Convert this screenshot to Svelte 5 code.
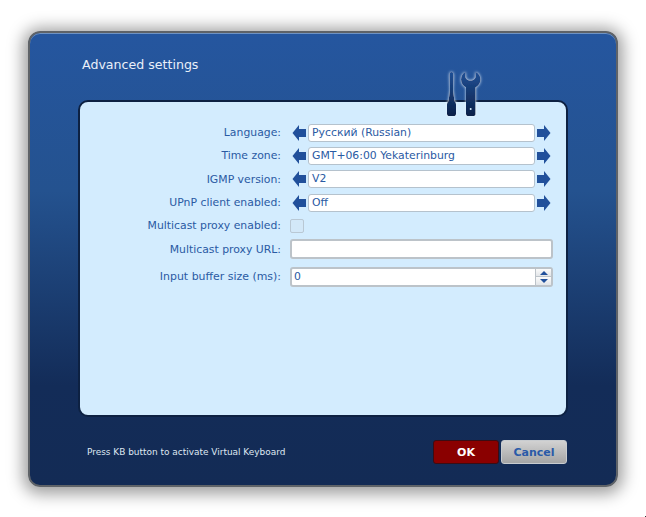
<script lang="ts">
  const pickers = [
    { label: 'Language:', value: 'Русский (Russian)' },
    { label: 'Time zone:', value: 'GMT+06:00 Yekaterinburg' },
    { label: 'IGMP version:', value: 'V2' },
    { label: 'UPnP client enabled:', value: 'Off' },
  ];
</script>

{#snippet arrow(right: boolean)}
  <svg class="arrow" viewBox="0 0 14 16" width="14" height="16" aria-hidden="true">
    <path d={right ? 'M0 4H7V0L13.5 8L7 16V12H0Z' : 'M14 4H7V0L0.5 8L7 16V12H14Z'} fill="#21509b" />
  </svg>
{/snippet}

<div class="page">
  <div class="dialog">
    <h1 class="title">Advanced settings</h1>

    <div class="panel">
      <svg class="tools" viewBox="0 0 40 50" width="40" height="50" aria-hidden="true">
        <defs>
          <linearGradient id="steel" x1="0" y1="0" x2="0" y2="1">
            <stop offset="0" stop-color="#1f4f95" />
            <stop offset="1" stop-color="#0b2149" />
          </linearGradient>
          <filter id="glow" x="-40%" y="-40%" width="180%" height="180%">
            <feDropShadow dx="0" dy="0" stdDeviation="1.6" flood-color="#e8f5ff" flood-opacity="1" />
          </filter>
        </defs>
        <g filter="url(#glow)" fill="url(#steel)">
          <path d="M6.5 3C8 3 8.5 4.5 8.5 7L8 21L9.5 32C10.5 33 11 34 11 35.5V45C11 46.5 10 47 9 47H4C3 47 2 46.5 2 45V35.5C2 34 2.5 33 3.5 32L5 21L4.5 7C4.5 4.5 5 3 6.5 3Z" />
          <path d="M20.5 3V7.5C20.5 10 23 11.5 25.5 11.5C28 11.5 30.5 10 30.5 7.5V3C33.5 4 35.5 7 35.5 10.5C35.5 14 33.5 17 30.5 18.5V45C30.5 46.5 29.5 47 28.5 47H23C22 47 21 46.5 21 45V18.5C18 17 16 14 16 10.5C16 7 18 4 20.5 3Z" />
        </g>
        <circle cx="25.7" cy="40" r="1" fill="#d6ebfb" />
      </svg>

      <div class="form">
        {#each pickers as row}
          <span class="label">{row.label}</span>
          <div class="picker">
            {@render arrow(false)}
            <div class="field value">{row.value}</div>
            {@render arrow(true)}
          </div>
        {/each}

        <span class="label">Multicast proxy enabled:</span>
        <div class="control"><span class="checkbox"></span></div>

        <span class="label">Multicast proxy URL:</span>
        <div class="control"><div class="field wide"></div></div>

        <span class="label buffer-label">Input buffer size (ms):</span>
        <div class="control buffer">
          <div class="field wide spin">
            <span class="spin-value">0</span>
            <span class="spin-buttons">
              <span class="spin-btn"><i class="up"></i></span>
              <span class="spin-btn"><i class="down"></i></span>
            </span>
          </div>
        </div>
      </div>
    </div>

    <div class="footer">
      <span class="hint">Press KB button to activate Virtual Keyboard</span>
      <div class="buttons">
        <button class="btn ok" type="button">OK</button>
        <button class="btn cancel" type="button">Cancel</button>
      </div>
    </div>
  </div>
  <span class="corner-dot"></span>
</div>

<style>
  :global(body) {
    background: #fff;
    font-family: 'DejaVu Sans', sans-serif;
  }

  .page {
    position: relative;
    width: 646px;
    height: 517px;
    padding: 31px 0 0 28px;
    box-sizing: border-box;
    overflow: hidden;
  }

  .corner-dot {
    position: absolute;
    right: 0;
    bottom: 0;
    width: 1px;
    height: 1px;
    background: #333;
  }

  .dialog {
    width: 590px;
    height: 456px;
    box-sizing: border-box;
    padding: 0 48px;
    border: 2px solid #5f6368;
    border-radius: 12px;
    background: linear-gradient(#25569f 0%, #24528f 35%, #132c58 78%, #132b55 100%);
    box-shadow: 0 2px 16px 5px rgba(0, 0, 0, 0.38), inset 0 1px 0 #6f93c4;
    display: flex;
    flex-direction: column;
  }

  .title {
    margin: 0;
    height: 67px;
    padding: 23px 0 0 4px;
    box-sizing: border-box;
    font-size: 12.6px;
    line-height: 17px;
    font-weight: 400;
    color: #e9f0f9;
  }

  .panel {
    position: relative;
    height: 317px;
    box-sizing: border-box;
    background: #d3ecfe;
    border: 2px solid #0d2142;
    border-radius: 10px;
    padding-top: 19px;
  }

  .tools {
    position: absolute;
    top: -33px;
    right: 81px;
  }

  .form {
    display: grid;
    grid-template-columns: 201px 1fr;
    grid-auto-rows: 23.3px;
    align-items: center;
    column-gap: 9px;
    color: #2a5aa3;
  }

  .label {
    text-align: right;
    white-space: nowrap;
    font-size: 10.85px;
  }

  .buffer-label {
    font-size: 10.95px;
  }

  .picker {
    display: flex;
    align-items: center;
    gap: 2px;
    margin-left: 2px;
  }

  .arrow {
    flex: none;
  }

  .field {
    box-sizing: border-box;
    background: #fff;
    border: 1px solid #b5c2cd;
    border-radius: 3px;
    color: #2a5aa3;
    font-size: 10.85px;
  }

  .value {
    width: 227px;
    height: 18px;
    line-height: 16px;
    padding-left: 3px;
    white-space: nowrap;
  }

  .checkbox {
    display: block;
    width: 12px;
    height: 12px;
    border: 1px solid #b9c8d4;
    border-radius: 2px;
    background: #d3e8f8;
  }

  .wide {
    width: 263px;
    height: 20px;
    border: 2px solid #bcc3c9;
    border-radius: 3px;
  }

  .buffer-label, .buffer { margin-top: 9px; }

  .spin {
    display: flex;
    align-items: stretch;
    justify-content: space-between;
    line-height: 16px;
  }

  .spin-value { padding-left: 2px; }

  .spin-buttons {
    display: flex;
    flex-direction: column;
    width: 15px;
    border-left: 1px solid #bcc3c9;
  }

  .spin-btn {
    flex: 1;
    display: flex;
    align-items: center;
    justify-content: center;
    background: linear-gradient(#fbfbfb, #e2e5e8);
  }

  .spin-btn + .spin-btn { border-top: 1px solid #bcc3c9; }

  .spin-btn i {
    display: block;
    width: 0;
    height: 0;
    border-left: 4px solid transparent;
    border-right: 4px solid transparent;
  }

  .up { border-bottom: 4px solid #21509b; }
  .down { border-top: 4px solid #21509b; }

  .footer {
    display: flex;
    justify-content: space-between;
    align-items: center;
    height: 24px;
    margin-top: 23px;
    margin-right: 1px;
  }

  .hint {
    font-size: 8.95px;
    color: #dfe7f1;
    padding-left: 9px;
  }

  .buttons {
    display: flex;
    gap: 2px;
  }

  .btn {
    width: 66px;
    height: 24px;
    padding: 0;
    border-radius: 3px;
    font-family: 'DejaVu Sans', sans-serif;
    font-size: 11px;
    font-weight: 700;
  }

  .ok {
    background: #8a0000;
    border: 1px solid #3a0d14;
    color: #fff;
  }

  .cancel {
    background: linear-gradient(#d2d2d2, #a5a5a5);
    border: 1px solid #c8ccd0;
    color: #2a5aa8;
  }
</style>
